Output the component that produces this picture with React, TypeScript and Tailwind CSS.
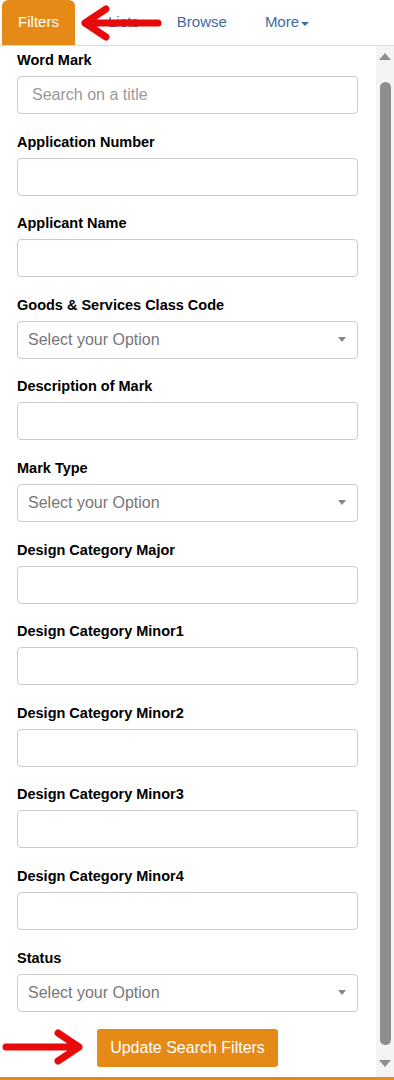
import React from "react";

const fields: { label: string; type: "input" | "select"; placeholder?: string }[] = [
  { label: "Word Mark", type: "input", placeholder: "Search on a title" },
  { label: "Application Number", type: "input" },
  { label: "Applicant Name", type: "input" },
  { label: "Goods & Services Class Code", type: "select" },
  { label: "Description of Mark", type: "input" },
  { label: "Mark Type", type: "select" },
  { label: "Design Category Major", type: "input" },
  { label: "Design Category Minor1", type: "input" },
  { label: "Design Category Minor2", type: "input" },
  { label: "Design Category Minor3", type: "input" },
  { label: "Design Category Minor4", type: "input" },
  { label: "Status", type: "select" },
];

function RedArrow({ dir }: { dir: "left" | "right" }) {
  return (
    <svg width="82" height="38" viewBox="0 0 82 38" fill="none">
      <g transform={dir === "left" ? "translate(82,0) scale(-1,1)" : undefined}>
        <path
          d="M4 19 L77 19 M56 5 L77 19 L56 33"
          stroke="#e8090b"
          strokeWidth="7"
          strokeLinecap="round"
          strokeLinejoin="round"
        />
      </g>
    </svg>
  );
}

export default function App() {
  return (
    <div
      className="relative h-[1080px] w-[394px] overflow-hidden bg-white"
      style={{ fontFamily: '"Liberation Sans", Arial, sans-serif' }}
    >
      {/* tabs */}
      <div className="relative flex h-[46px] items-end border-b border-[#ddd] pl-[2px]">
        <div className="flex h-[45px] w-[73px] items-center justify-center rounded-t-[6px] bg-[#e68a17] text-[15px] text-white">
          Filters
        </div>
        <div className="flex h-[45px] items-center pl-[33px] text-[15px] text-[#3f6c9f]">Lists</div>
        <div className="flex h-[45px] items-center pl-[38px] text-[15px] text-[#3f6c9f]">Browse</div>
        <div className="flex h-[45px] items-center pl-[38px] text-[15px] text-[#3f6c9f]">
          More
          <span className="ml-[2px] mt-[2px] inline-block h-0 w-0 border-x-[4px] border-t-[4px] border-x-transparent border-t-[#3f6c9f]" />
        </div>
        <div className="absolute left-[80px] top-[4px]">
          <RedArrow dir="left" />
        </div>
      </div>

      <div className="flex h-[1031px]">
        <div className="flex-1 pl-[17px] pr-[18px] pt-[4px]">
          {fields.map((f) => (
            <div key={f.label} className="mb-[17.6px]">
              <div className="mb-[6px] h-[20px] text-[14.5px] font-bold leading-[20px] text-black">
                {f.label}
              </div>
              {f.type === "input" ? (
                <div className="flex h-[38px] items-center rounded-[4px] border border-[#ccc] px-[14px] text-[16px] text-[#999]">
                  {f.placeholder}
                </div>
              ) : (
                <div className="flex h-[38px] items-center justify-between rounded-[4px] border border-[#ccc] pl-[10px] pr-[11px] text-[16px] text-[#777]">
                  <span>Select your Option</span>
                  <span className="inline-block h-0 w-0 border-x-[4px] border-t-[5px] border-x-transparent border-t-[#888]" />
                </div>
              )}
            </div>
          ))}
          <div className="relative flex justify-center">
            <button className="h-[38px] w-[181px] rounded-[3px] bg-[#e68a17] text-[16px] text-white">
              Update Search Filters
            </button>
            <div className="absolute left-[-15px] top-[-1px]">
              <RedArrow dir="right" />
            </div>
          </div>
        </div>

        {/* scrollbar */}
        <div className="flex w-[18px] flex-col items-center bg-[#f4f4f4]">
          <div className="mt-[7px] h-0 w-0 border-x-[6px] border-b-[7px] border-x-transparent border-b-[#8e8e8e]" />
          <div className="mt-[22px] w-[11px] flex-1 rounded-[6px] bg-[#8e8e8e]" />
          <div className="mb-[10px] mt-[15px] h-0 w-0 border-x-[6px] border-t-[7px] border-x-transparent border-t-[#8e8e8e]" />
        </div>
      </div>

      <div className="h-[3px] bg-[#e68a17]" />
    </div>
  );
}
